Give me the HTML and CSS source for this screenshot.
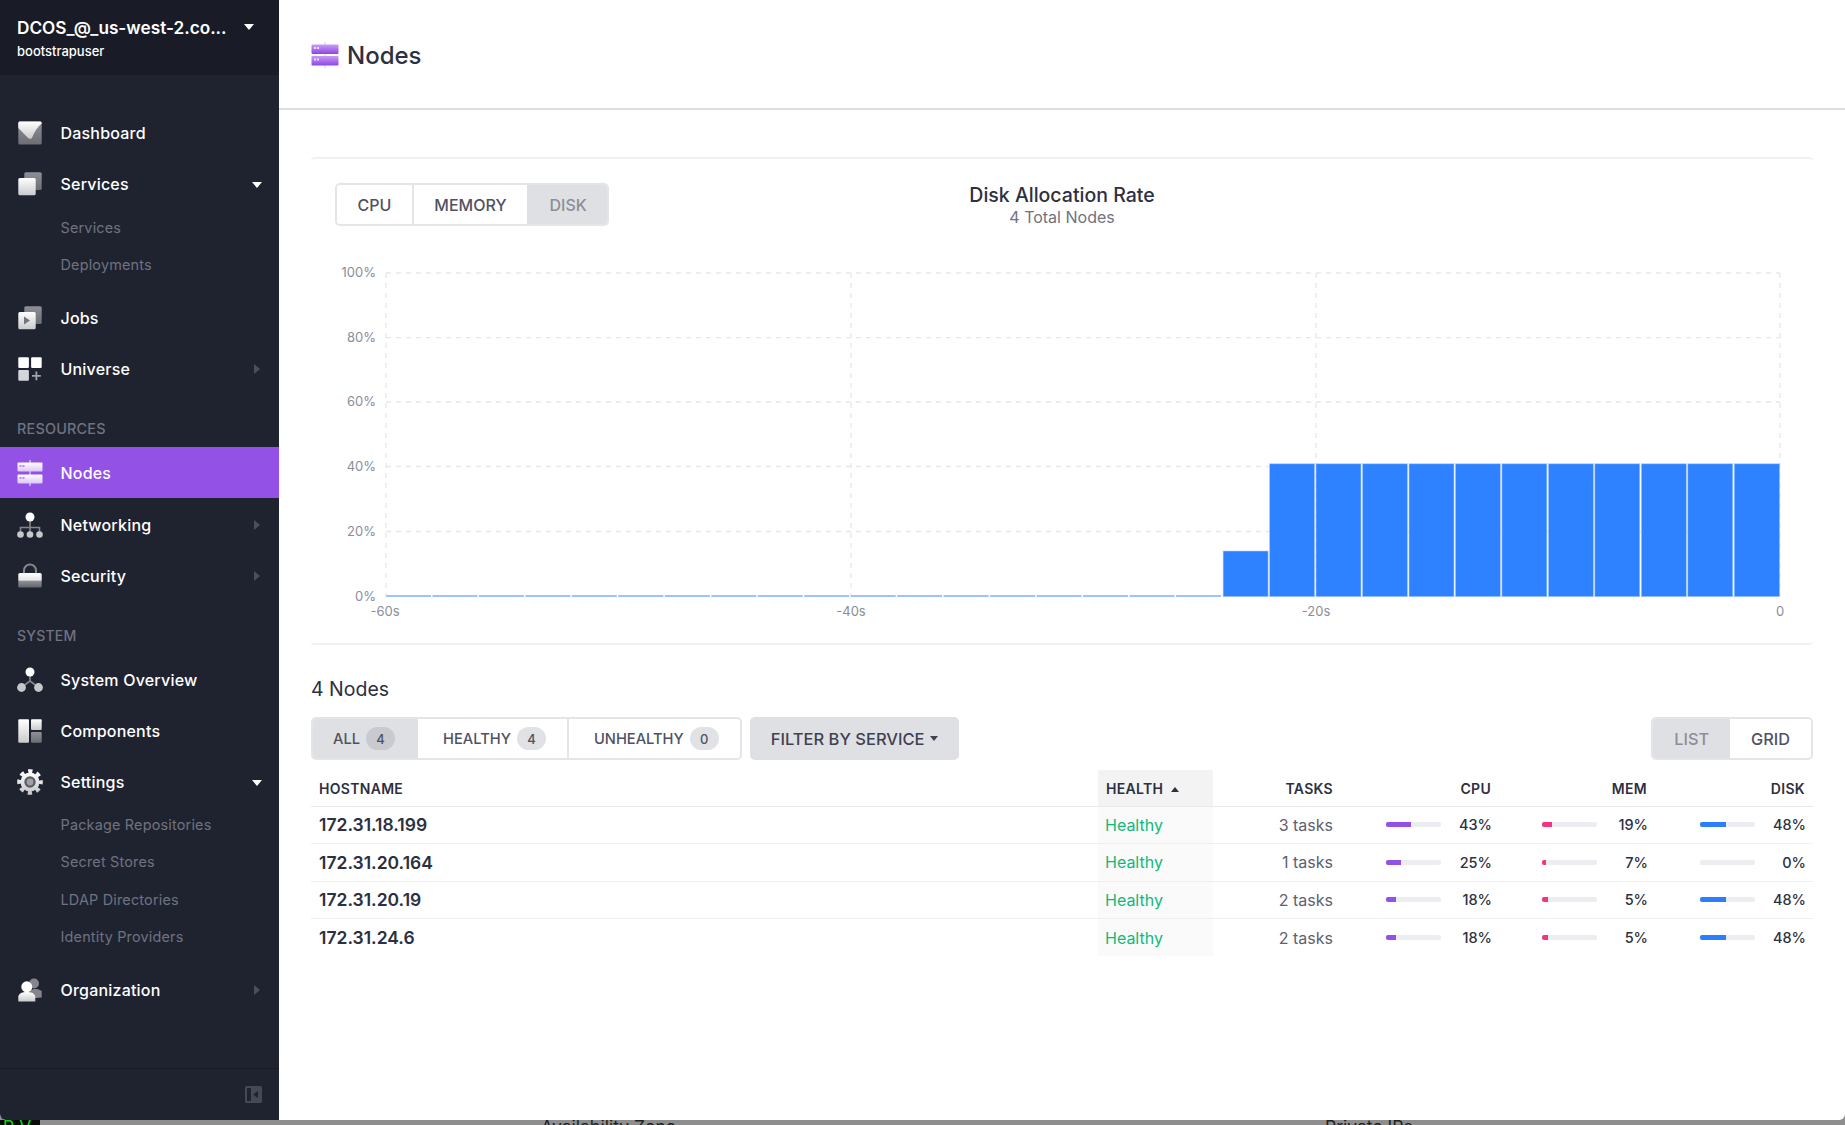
FILE: index.html
```html
<!DOCTYPE html>
<html lang="en">
<head>
  <meta charset="UTF-8" />
  <title>Nodes</title>
  <link rel="stylesheet" href="styles.css">
</head>
<body>
  <svg class="defs" width="0" height="0" aria-hidden="true">
    <defs>
      <linearGradient id="light" x1="0" y1="0" x2="0" y2="1">
        <stop offset="0" stop-color="#ffffff" />
        <stop offset="1" stop-color="#c9cacd" />
      </linearGradient>
      <linearGradient id="dim" x1="0" y1="0" x2="0" y2="1">
        <stop offset="0" stop-color="#8e9096" />
        <stop offset="1" stop-color="#6c6e75" />
      </linearGradient>
      <linearGradient id="fade" x1="0" y1="0" x2="0" y2="1">
        <stop offset="0" stop-color="#ffffff" />
        <stop offset="0.5" stop-color="#e4e4e6" />
        <stop offset="0.55" stop-color="#8f9096" />
        <stop offset="1" stop-color="#63656c" />
      </linearGradient>
      <linearGradient id="onpurple" x1="0" y1="0" x2="0" y2="1">
        <stop offset="0" stop-color="#ffffff" />
        <stop offset="1" stop-color="#dcc6f6" />
      </linearGradient>
      <linearGradient id="purple" x1="0" y1="0" x2="0" y2="1">
        <stop offset="0" stop-color="#c99cf2" />
        <stop offset="1" stop-color="#8f45e6" />
      </linearGradient>
    </defs>
  </svg>

  <div class="window">
    <aside class="sidebar">
      <div class="cluster">
        <div class="cluster-text">
          <div class="cluster-name">DCOS_@_us-west-2.co...</div>
          <div class="cluster-user">bootstrapuser</div>
        </div>
        <span class="caret caret-down"></span>
      </div>

      <nav class="nav">
        <a class="nav-item">
          <svg class="nav-icon" viewBox="0 0 26 26"><rect x="1.3" y="1.5" width="23.4" height="23" rx="1.5" fill="url(#dim)" /><path d="M1.3 3a1.5 1.5 0 0 1 1.5-1.5h20.4a1.5 1.5 0 0 1 1.5 1.5v.5c-4.5 4-7.5 8.5-9.5 14-.6 1.6-3.4 1.6-4.4.2L1.3 8z" fill="url(#light)" /></svg>
          <span>Dashboard</span>
        </a>
        <a class="nav-item">
          <svg class="nav-icon" viewBox="0 0 26 26"><rect x="7.3" y="1.3" width="17.4" height="17.7" rx="1.5" fill="url(#dim)" /><rect x="1.3" y="7" width="17.4" height="17.3" rx="1.5" fill="url(#light)" /></svg>
          <span>Services</span>
          <span class="caret caret-down"></span>
        </a>
        <div class="subnav">
          <a class="sub-item">Services</a>
          <a class="sub-item">Deployments</a>
        </div>
        <a class="nav-item">
          <svg class="nav-icon" viewBox="0 0 26 26"><rect x="7.3" y="1.3" width="17.4" height="17.7" rx="1.5" fill="url(#dim)" /><rect x="1.3" y="7" width="17.4" height="17.3" rx="1.5" fill="url(#light)" /><path d="M7 11.5l6 4-6 4z" fill="#74767d" /></svg>
          <span>Jobs</span>
        </a>
        <a class="nav-item">
          <svg class="nav-icon" viewBox="0 0 26 26"><rect x="1.3" y="1.3" width="10.6" height="10.6" rx="1" fill="#fff" /><rect x="14.1" y="1.3" width="10.6" height="10.6" rx="1" fill="#fff" /><rect x="1.3" y="14.1" width="10.6" height="10.6" rx="1" fill="#d4d5d8" /><path d="M19.4 15.5v8.8M15 19.9h8.8" stroke="#a3a4a9" stroke-width="1.8" fill="none" /></svg>
          <span>Universe</span>
          <span class="caret caret-right"></span>
        </a>

        <div class="nav-label">Resources</div>
        <a class="nav-item active">
          <svg class="nav-icon" viewBox="0 0 26 26"><rect x="12.3" y="0" width="1.4" height="26" fill="#d9c2f5" /><rect x="0.5" y="2.5" width="25" height="9" rx="1" fill="url(#onpurple)" /><rect x="0.5" y="14.5" width="25" height="9" rx="1" fill="url(#onpurple)" /><path d="M2.5 5h2v2h-2zM5.5 5h2v2h-2zM2.5 17h2v2h-2zM5.5 17h2v2h-2z" fill="#b98aef" /></svg>
          <span>Nodes</span>
        </a>
        <a class="nav-item">
          <svg class="nav-icon" viewBox="0 0 26 26"><path d="M13 6v14M3.5 20v-4.500h19V20" stroke="#85868c" stroke-width="1.6" fill="none" /><circle cx="13" cy="5" r="4.5" fill="#fff" /><circle cx="3.5" cy="22.5" r="3.3" fill="#c6c7cb" /><circle cx="13" cy="22.5" r="3.3" fill="#c6c7cb" /><circle cx="22.5" cy="22.5" r="3.3" fill="#c6c7cb" /></svg>
          <span>Networking</span>
          <span class="caret caret-right"></span>
        </a>
        <a class="nav-item">
          <svg class="nav-icon" viewBox="0 0 26 26"><path d="M7 11V7.500a6 6 0 0 1 12 0V11" stroke="#85868c" stroke-width="2" fill="none" /><rect x="1.3" y="10" width="23.4" height="14.5" rx="1.5" fill="url(#fade)" /></svg>
          <span>Security</span>
          <span class="caret caret-right"></span>
        </a>

        <div class="nav-label nav-label-system">System</div>
        <a class="nav-item">
          <svg class="nav-icon" viewBox="0 0 26 26"><path d="M13 6v8L5 20M13 14l8 6" stroke="#85868c" stroke-width="1.6" fill="none" /><circle cx="13" cy="5" r="4.5" fill="#fff" /><circle cx="4.5" cy="20.5" r="4.4" fill="#c6c7cb" /><circle cx="21.5" cy="20.5" r="4.4" fill="#c6c7cb" /></svg>
          <span>System Overview</span>
        </a>
        <a class="nav-item">
          <svg class="nav-icon" viewBox="0 0 26 26"><rect x="1.3" y="1.3" width="10.7" height="23.4" rx="1" fill="url(#light)" /><rect x="14" y="1.3" width="10.7" height="10.7" rx="1" fill="url(#light)" /><rect x="14" y="14" width="10.7" height="10.7" rx="1" fill="url(#dim)" /></svg>
          <span>Components</span>
        </a>
        <a class="nav-item">
          <svg class="nav-icon" viewBox="0 0 26 26"><circle cx="13" cy="13" r="10.8" fill="none" stroke="url(#light)" stroke-width="4" stroke-dasharray="4.24 4.24" stroke-dashoffset="2.12" /><circle cx="13" cy="13" r="9.5" fill="url(#light)" /><circle cx="13" cy="13" r="5.7" fill="#5a5c64" /><circle cx="13" cy="13" r="3.4" fill="#9fa0a6" /></svg>
          <span>Settings</span>
          <span class="caret caret-down"></span>
        </a>
        <div class="subnav subnav-settings">
          <a class="sub-item">Package Repositories</a>
          <a class="sub-item">Secret Stores</a>
          <a class="sub-item">LDAP Directories</a>
          <a class="sub-item">Identity Providers</a>
        </div>
        <a class="nav-item">
          <svg class="nav-icon" viewBox="0 0 26 26"><circle cx="17" cy="6.5" r="5" fill="#85868c" /><path d="M13 21.500v-8c3-2 8-2.500 11.700.5v6.500z" fill="#85868c" /><circle cx="9.8" cy="9.8" r="5.5" fill="#fff" /><path d="M1.300 24.500v-4.300c0-4 4.500-5.200 8.500-5.200s8.500 1.200 8.500 5.200v4.300z" fill="url(#light)" /></svg>
          <span>Organization</span>
          <span class="caret caret-right"></span>
        </a>
      </nav>

      <div class="sidebar-foot">
        <svg class="collapse-icon" viewBox="0 0 17 17"><rect width="17" height="17" rx="1.5" fill="#454856" /><rect x="2" y="2" width="4" height="13" fill="#1f2330" /><path d="M13 5v7L8 8.500z" fill="#1f2330" /></svg>
      </div>
    </aside>

    <main class="main">
      <header class="page-header">
        <svg class="page-icon" viewBox="0 0 28 26"><rect x="13.3" y="0" width="1.4" height="26" fill="#e3d2f8" /><rect x="0.5" y="2.5" width="27" height="9.5" rx="1" fill="url(#purple)" /><rect x="0.5" y="14" width="27" height="9.5" rx="1" fill="url(#purple)" /><path d="M3 5h2v2H3zM6 5h2v2H6zM3 16.500h2v2H3zM6 16.500h2v2H6z" fill="#eadcfb" /></svg>
        <h1 class="page-title">Nodes</h1>
      </header>

      <div class="content">
        <section class="panel">
          <div class="panel-head">
            <div class="seg">
              <a class="seg-btn">CPU</a>
              <a class="seg-btn">Memory</a>
              <a class="seg-btn selected muted">Disk</a>
            </div>
            <div class="chart-title">
              <div class="chart-name">Disk Allocation Rate</div>
              <div class="chart-sub">4 Total Nodes</div>
            </div>
          </div>

          <svg class="chart" viewBox="311 250 1502 386">
            <g class="grid">
              <path d="M386 273H1780M386 337.700H1780M386 402H1780M386 466.500H1780M386 531.500H1780" />
              <path d="M386 273V596M851 273V596M1316 273V596M1780 273V596" />
            </g>
            <g class="axis-y">
              <text x="376" y="277">100%</text>
              <text x="376" y="342">80%</text>
              <text x="376" y="406">60%</text>
              <text x="376" y="471">40%</text>
              <text x="376" y="536">20%</text>
              <text x="376" y="601">0%</text>
            </g>
            <g class="axis-x">
              <text x="385" y="616">-60s</text>
              <text x="851" y="616">-40s</text>
              <text x="1316" y="616">-20s</text>
              <text x="1780" y="616">0</text>
            </g>
            <line class="baseline" x1="386" y1="596" x2="1222" y2="596" />
            <g class="bars">
              <rect x="1223.1" y="551" width="45" height="45.7" />
              <rect x="1269.6" y="463.8" width="45" height="132.9" />
              <rect x="1316" y="463.8" width="45" height="132.9" />
              <rect x="1362.5" y="463.8" width="45" height="132.9" />
              <rect x="1409" y="463.8" width="45" height="132.9" />
              <rect x="1455.4" y="463.8" width="45" height="132.9" />
              <rect x="1501.9" y="463.8" width="45" height="132.9" />
              <rect x="1548.4" y="463.8" width="45" height="132.9" />
              <rect x="1594.8" y="463.8" width="45" height="132.9" />
              <rect x="1641.3" y="463.8" width="45" height="132.9" />
              <rect x="1687.8" y="463.8" width="45" height="132.9" />
              <rect x="1734.2" y="463.8" width="45.5" height="132.9" />
            </g>
          </svg>
        </section>

        <h2 class="nodes-count">4 Nodes</h2>

        <div class="toolbar">
          <div class="seg">
            <a class="seg-btn selected">All <span class="badge">4</span></a>
            <a class="seg-btn">Healthy <span class="badge">4</span></a>
            <a class="seg-btn">Unhealthy <span class="badge">0</span></a>
          </div>
          <a class="filter-btn">Filter by Service <span class="caret-small"></span></a>
          <div class="seg seg-view">
            <a class="seg-btn selected muted">List</a>
            <a class="seg-btn">Grid</a>
          </div>
        </div>

        <table class="nodes-table">
          <colgroup>
            <col class="col-host" /><col class="col-health" /><col class="col-tasks" />
            <col class="col-cpu" /><col class="col-mem" /><col class="col-disk" />
          </colgroup>
          <thead>
            <tr>
              <th>Hostname</th>
              <th class="sorted">Health <span class="sort-up"></span></th>
              <th class="num">Tasks</th>
              <th class="num">CPU</th>
              <th class="num">Mem</th>
              <th class="num">Disk</th>
            </tr>
          </thead>
          <tbody>
            <tr>
              <td class="host">172.31.18.199</td>
              <td class="health">Healthy</td>
              <td class="tasks">3 tasks</td>
              <td><div class="usage"><div class="meter"><div class="fill fill-cpu" style="width:45%"></div></div><span class="pct">43%</span></div></td>
              <td><div class="usage"><div class="meter"><div class="fill fill-mem" style="width:19%"></div></div><span class="pct">19%</span></div></td>
              <td><div class="usage"><div class="meter"><div class="fill fill-disk" style="width:48%"></div></div><span class="pct">48%</span></div></td>
            </tr>
            <tr>
              <td class="host">172.31.20.164</td>
              <td class="health">Healthy</td>
              <td class="tasks">1 tasks</td>
              <td><div class="usage"><div class="meter"><div class="fill fill-cpu" style="width:27%"></div></div><span class="pct">25%</span></div></td>
              <td><div class="usage"><div class="meter"><div class="fill fill-mem" style="width:8%"></div></div><span class="pct">7%</span></div></td>
              <td><div class="usage"><div class="meter"></div><span class="pct">0%</span></div></td>
            </tr>
            <tr>
              <td class="host">172.31.20.19</td>
              <td class="health">Healthy</td>
              <td class="tasks">2 tasks</td>
              <td><div class="usage"><div class="meter"><div class="fill fill-cpu" style="width:19%"></div></div><span class="pct">18%</span></div></td>
              <td><div class="usage"><div class="meter"><div class="fill fill-mem" style="width:10%"></div></div><span class="pct">5%</span></div></td>
              <td><div class="usage"><div class="meter"><div class="fill fill-disk" style="width:48%"></div></div><span class="pct">48%</span></div></td>
            </tr>
            <tr>
              <td class="host">172.31.24.6</td>
              <td class="health">Healthy</td>
              <td class="tasks">2 tasks</td>
              <td><div class="usage"><div class="meter"><div class="fill fill-cpu" style="width:19%"></div></div><span class="pct">18%</span></div></td>
              <td><div class="usage"><div class="meter"><div class="fill fill-mem" style="width:10%"></div></div><span class="pct">5%</span></div></td>
              <td><div class="usage"><div class="meter"><div class="fill fill-disk" style="width:48%"></div></div><span class="pct">48%</span></div></td>
            </tr>
          </tbody>
        </table>
      </div>
    </main>
  </div>

  <div class="backdrop">
    <div class="terminal">R V</div>
    <div class="behind behind-zone">Availability Zone</div>
    <div class="behind behind-ip">Private IPs</div>
  </div>
</body>
</html>
```

FILE: styles.css
```css
* {
  box-sizing: border-box;
  margin: 0;
  padding: 0;
}

html, body {
  height: 100%;
  overflow: hidden;
}

body {
  font-family: Inter, "Noto Sans", sans-serif;
  background-color: #8e8e8e;
  color: #2d3040;
  display: flex;
  flex-direction: column;
}

a {
  color: inherit;
  text-decoration: none;
}

.defs {
  position: absolute;
}

.window {
  display: flex;
  height: 1120px;
  background-color: #fff;
  border-radius: 0 0 6px 6px;
  overflow: hidden;
}

/* sidebar */
.sidebar {
  width: 279px;
  flex-shrink: 0;
  display: flex;
  flex-direction: column;
  background-color: #1f2330;
  color: #fff;
}

.cluster {
  height: 75px;
  flex-shrink: 0;
  display: flex;
  align-items: flex-start;
  padding: 17px 19px 0 17px;
  background-color: #191c27;
}

.cluster-text {
  width: 218px;
}

.cluster-name {
  font-size: 17.2px;
  font-weight: 600;
  line-height: 22px;
  white-space: nowrap;
}

.cluster-user {
  font-size: 13px;
  font-weight: 500;
  line-height: 18px;
  margin-top: 3px;
}

.cluster .caret {
  margin: 7px 0 0 9px;
}

.nav {
  flex: 1;
  padding-top: 32.5px;
}

.nav-item {
  display: flex;
  align-items: center;
  height: 51px;
  padding: 0 18px 0 17px;
  font-size: 16px;
  font-weight: 500;
  letter-spacing: 0.2px;
}

.nav-item.active {
  background-color: #9351e5;
}

.nav-item.active + .nav-item {
  margin-top: 1px;
}

.nav-icon {
  width: 26px;
  height: 26px;
  flex-shrink: 0;
  margin-right: 17.5px;
}

.nav-item .caret {
  margin-left: auto;
}

.nav-item .caret-down {
  margin-top: 2px;
  margin-right: -1px;
}

.caret {
  display: block;
  width: 0;
  height: 0;
}

.caret-down {
  border-left: 5px solid transparent;
  border-right: 5px solid transparent;
  border-top: 6.5px solid #fff;
}

.caret-right {
  border-top: 5px solid transparent;
  border-bottom: 5px solid transparent;
  border-left: 6.5px solid #4c4f5b;
  margin-right: 1px;
}

.subnav {
  padding-bottom: 10px;
}

.sub-item {
  display: flex;
  align-items: center;
  height: 36.5px;
  padding-left: 60.5px;
  font-size: 14.4px;
  letter-spacing: 0.2px;
  color: #6f7280;
}

.subnav-settings {
  margin-top: -2px;
  padding-bottom: 9px;
}

.subnav-settings .sub-item {
  height: 37.5px;
}

.nav-label {
  height: 52.5px;
  padding: 25px 0 0 17px;
  font-size: 14.4px;
  font-weight: 500;
  line-height: 18px;
  letter-spacing: 0.2px;
  text-transform: uppercase;
  color: #6f7280;
}

.nav-label-system {
  height: 53.5px;
  padding-top: 26px;
  font-size: 14px;
}

.sidebar-foot {
  height: 52px;
  flex-shrink: 0;
  display: flex;
  justify-content: flex-end;
  align-items: center;
  padding-right: 17px;
  border-top: 1px solid #191c27;
}

.collapse-icon {
  width: 17px;
  height: 17px;
}

/* main */
.main {
  flex: 1;
  min-width: 0;
}

.page-header {
  height: 110px;
  display: flex;
  align-items: center;
  padding: 2px 0 0 32px;
  border-bottom: 2px solid #dcdde0;
}

.page-icon {
  width: 28px;
  height: 26px;
  margin-right: 8px;
}

.page-title {
  font-size: 24px;
  font-weight: 500;
  color: #2d3040;
}

.content {
  padding: 47px 32px 0;
}

.panel {
  height: 488px;
  padding-top: 24px;
  border-top: 2px solid #f1f1f3;
  border-bottom: 2px solid #f1f1f3;
  border-radius: 4px;
}

.panel-head {
  display: grid;
  grid-template-columns: 1fr auto 1fr;
  align-items: start;
  padding-left: 24px;
}

.chart-title {
  grid-column: 2;
  text-align: center;
  margin-left: -24px;
}

.chart-name {
  font-size: 19.5px;
  font-weight: 500;
  line-height: 25px;
}

.chart-sub {
  font-size: 16px;
  line-height: 19px;
  color: #6f7280;
}

.seg {
  display: inline-flex;
  justify-self: start;
  height: 43px;
  border: 2px solid #e4e5e8;
  border-radius: 5px;
  overflow: hidden;
  background-color: #fff;
}

.seg-btn {
  display: flex;
  align-items: center;
  padding: 0 20.5px;
  font-size: 16px;
  font-weight: 500;
  text-transform: uppercase;
  color: #4f5263;
}

.seg-btn + .seg-btn {
  border-left: 2px solid #e4e5e8;
}

.seg-btn.selected {
  background-color: #dfe0e4;
  border-left-color: #dfe0e4;
}

.seg-btn.selected + .seg-btn {
  border-left: 0;
}

.seg-btn.muted {
  color: #8b8d99;
}

.chart {
  display: block;
  width: 1502px;
  height: 386px;
  margin-top: 23px;
}

.grid path {
  fill: none;
  stroke: #e6e7ea;
  stroke-width: 1.3;
  stroke-dasharray: 5 5;
}

.axis-y text,
.axis-x text {
  font-size: 13px;
  fill: #8b8d99;
}

.axis-y text {
  text-anchor: end;
}

.axis-x text {
  text-anchor: middle;
}

.baseline {
  stroke: #7fb0fb;
  stroke-width: 1.5;
  stroke-dasharray: 45 1.47;
}

.bars rect {
  fill: #2b7fff;
  fill-opacity: 0.98;
  stroke: #a9caff;
  stroke-width: 0.6;
}

.nodes-count {
  font-size: 19.5px;
  font-weight: 400;
  line-height: 24px;
  margin-top: 32px;
}

.toolbar {
  display: flex;
  align-items: stretch;
  margin-top: 16px;
}

.toolbar .seg-btn {
  padding: 0 21px 0 25px;
  font-size: 14.7px;
}

.toolbar .seg-btn.selected {
  padding: 0 23px 0 20px;
}

.toolbar .seg-view .seg-btn,
.toolbar .seg-view .seg-btn.selected {
  padding: 0 21px;
  font-size: 16.3px;
}

.badge {
  display: inline-flex;
  justify-content: center;
  align-items: center;
  min-width: 29px;
  height: 23px;
  margin-left: 6px;
  border-radius: 12px;
  background-color: #e1e2e6;
  font-size: 13px;
  color: #4f5263;
}

.seg-btn.selected .badge {
  background-color: #c9cacf;
}

.filter-btn {
  display: flex;
  align-items: center;
  margin-left: 8px;
  padding: 0 21px;
  border-radius: 5px;
  background-color: #dfe0e4;
  font-size: 16.5px;
  font-weight: 500;
  text-transform: uppercase;
  color: #3f4252;
}

.caret-small {
  display: inline-block;
  margin-left: 5px;
  border-left: 4.5px solid transparent;
  border-right: 4.5px solid transparent;
  border-top: 5px solid #3f4252;
}

.seg-view {
  margin-left: auto;
}

.nodes-table {
  width: 100%;
  margin-top: 10px;
  table-layout: fixed;
  border-collapse: collapse;
}

.col-host { width: 787px; }
.col-health { width: 115px; }
.col-tasks { width: 128px; }
.col-cpu { width: 158px; }
.col-mem { width: 156px; }
.col-disk { width: 158px; }

.nodes-table th {
  height: 36px;
  padding: 2px 8px 0;
  font-size: 14px;
  font-weight: 600;
  letter-spacing: 0.3px;
  text-align: left;
  text-transform: uppercase;
  border-bottom: 1.5px solid #e9eaec;
}

.nodes-table th.num {
  text-align: right;
}

.nodes-table th.sorted {
  background-color: #f3f3f4;
}

.sort-up {
  display: inline-block;
  margin: 0 0 2px 4px;
  border-left: 4.5px solid transparent;
  border-right: 4.5px solid transparent;
  border-bottom: 5px solid #2d3040;
}

.nodes-table td {
  height: 37.5px;
  padding: 0 8px;
  font-size: 16px;
  border-bottom: 1.5px solid #eeeff1;
}

.nodes-table tbody tr:last-child td {
  border-bottom: 0;
}

.nodes-table td.host {
  font-size: 17.5px;
  font-weight: 600;
}

.nodes-table td.health {
  padding-left: 7px;
  color: #10b97a;
  background-color: #fafafa;
}

.tasks {
  text-align: right;
  color: #5e6070;
}

.usage {
  display: flex;
  align-items: center;
  justify-content: flex-end;
  margin-right: -1px;
}

.meter {
  width: 55px;
  height: 5px;
  margin-right: 2px;
  border-radius: 2px;
  overflow: hidden;
  background-color: #ecedf0;
}

.fill {
  height: 100%;
}

.fill-cpu { background-color: #9351e5; }
.fill-mem { background-color: #f5337f; }
.fill-disk { background-color: #2b7fff; }

.pct {
  width: 49px;
  text-align: right;
  font-size: 14.5px;
  font-weight: 500;
}

/* what shows below the window */
.backdrop {
  flex: 1;
  display: flex;
  overflow: hidden;
  font-size: 17.5px;
  line-height: 14px;
  color: #222;
}

.terminal {
  width: 40px;
  padding-left: 3px;
  background-color: #0a0a0a;
  color: #16d316;
  white-space: pre;
}

.behind-zone {
  margin-left: 501px;
  width: 784px;
}
```
